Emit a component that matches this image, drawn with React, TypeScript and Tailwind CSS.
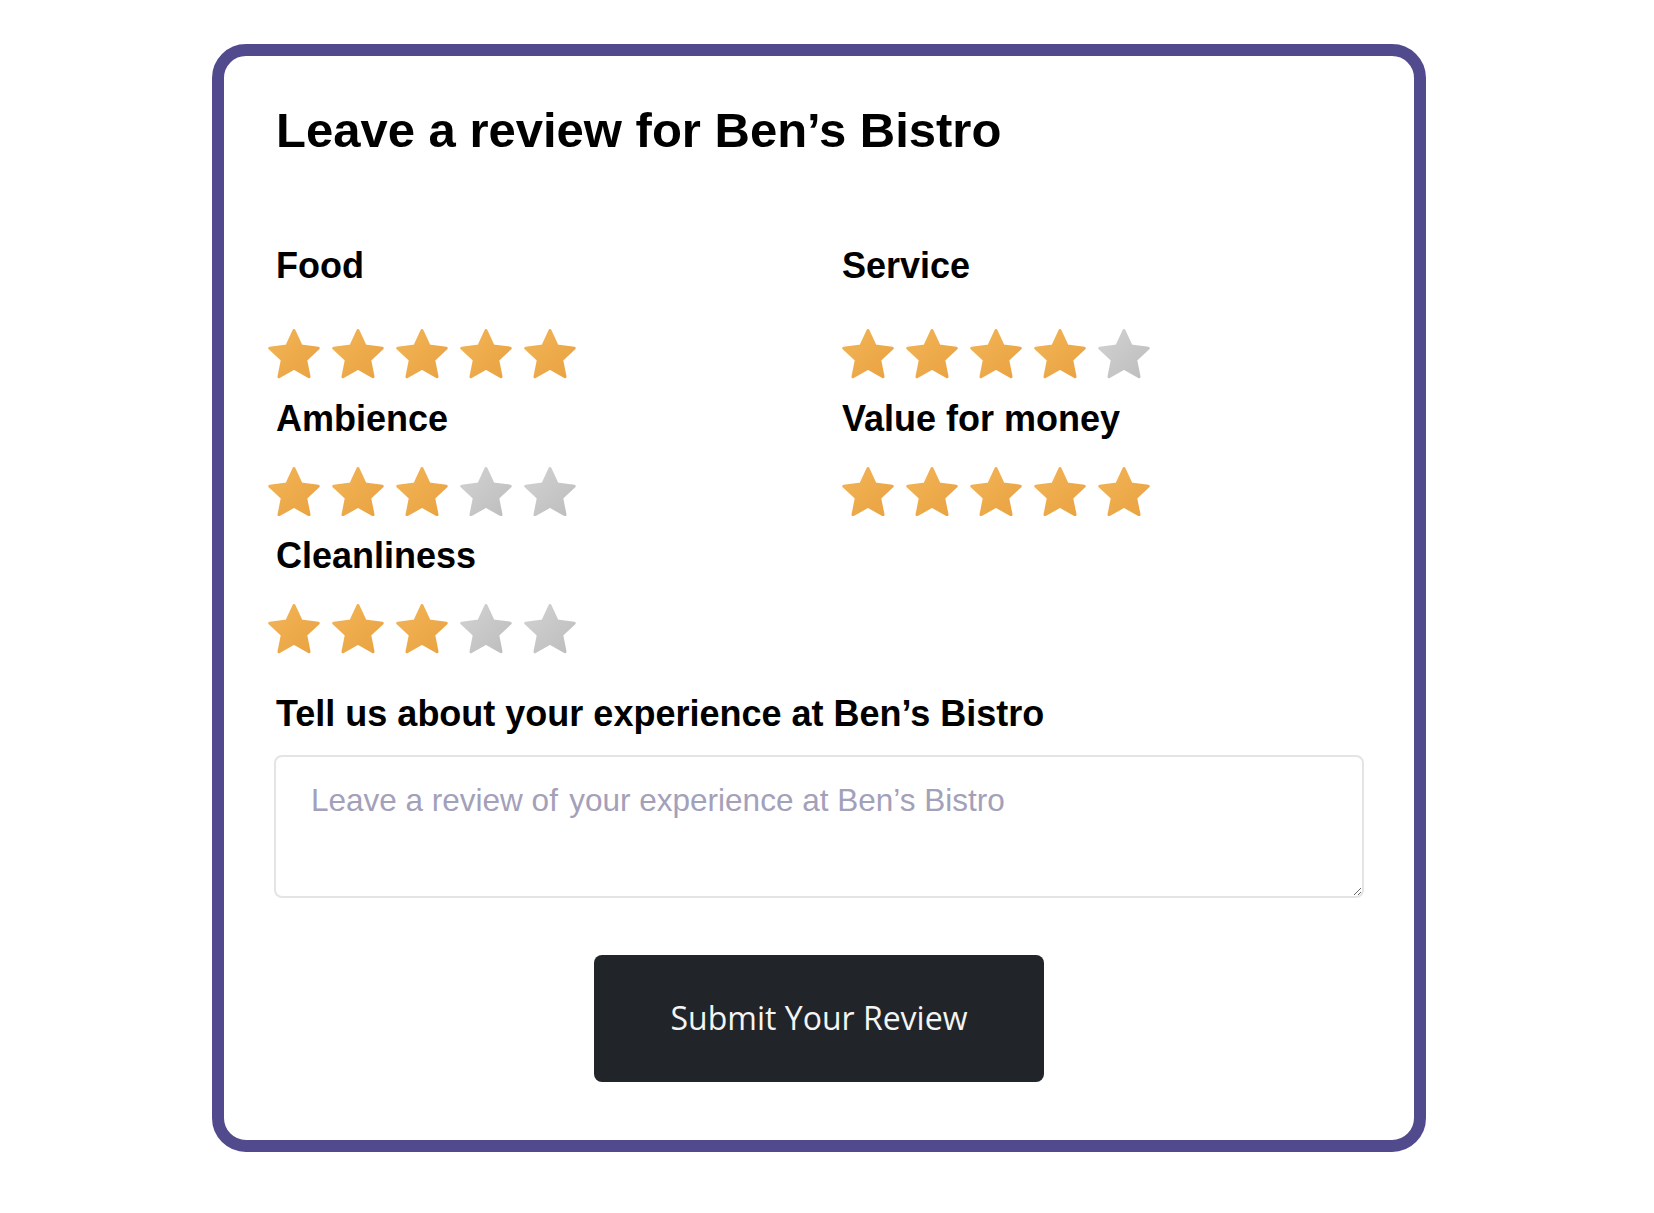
import React, { useId } from 'react';

const STAR_PATH =
  'M50 0 L64.11 30.58 L97.55 34.55 L72.83 57.42 L79.39 90.45 L50 74 L20.61 90.45 L27.17 57.42 L2.45 34.55 L35.89 30.58 Z';

const Star: React.FC<{ filled: boolean }> = ({ filled }) => {
  const id = useId();
  const from = filled ? '#f2b456' : '#d2d2d2';
  const to = filled ? '#e9a241' : '#bdbdbd';
  return (
    <svg width="52" height="49.5" viewBox="-1 -3 102 97" className="shrink-0">
      <defs>
        <linearGradient id={id} x1="0" y1="0" x2="1" y2="1">
          <stop offset="0" stopColor={from} />
          <stop offset="1" stopColor={to} />
        </linearGradient>
      </defs>
      <path d={STAR_PATH} fill={`url(#${id})`} stroke={`url(#${id})`} strokeWidth="6" strokeLinejoin="round" />
    </svg>
  );
};

interface RatingProps {
  label: string;
  value: number;
  first?: boolean;
  right?: boolean;
}

const Rating: React.FC<RatingProps> = ({ label, value, first, right }) => (
  <div className="flex flex-col">
    <div
      className={`pl-[2px] text-[36px] font-bold leading-none text-black ${first ? 'mb-[45px]' : 'mb-[30px]'}`}
    >
      {label}
    </div>
    <div className={`flex gap-[12px] ${right ? 'ml-[2px]' : '-ml-[6px]'}`}>
      {[1, 2, 3, 4, 5].map((n) => (
        <Star key={n} filled={n <= value} />
      ))}
    </div>
  </div>
);

const App: React.FC = () => {
  return (
    <div className="min-h-screen bg-white pt-[44px] pl-[212px]" style={{ fontFamily: '"Liberation Sans", Arial, sans-serif' }}>
      <div className="w-[1214px] h-[1108px] rounded-[34px] border-[12px] border-[#514a8c] bg-white px-[50px] pt-[50px]">
        <h1 className="pl-[2px] text-[49px] font-bold leading-none text-black">Leave a review for Ben’s Bistro</h1>

        <div className="mt-[93px] grid grid-cols-2 gap-x-[42px] gap-y-[22px]">
          <Rating label="Food" value={5} first />
          <Rating label="Service" value={4} first right />
          <Rating label="Ambience" value={3} />
          <Rating label="Value for money" value={5} right />
          <Rating label="Cleanliness" value={3} />
        </div>

        <div className="mt-[42px] pl-[2px] text-[36px] font-bold leading-none text-black">
          Tell us about your experience at Ben’s Bistro
        </div>

        <textarea
          className="mt-[23px] block h-[143px] w-full rounded-[8px] border-2 border-[#e4e4e4] bg-white pl-[35px] pr-4 pt-[25px] text-[31.5px] leading-[1.2] text-black outline-none placeholder:text-[#a3a0b9]"
          placeholder={'Leave a review of\u200A your experience at Ben’s Bistro'}
        />

        <div className="mt-[57px] flex justify-center">
          <button
            type="button"
            className="h-[127px] w-[450px] rounded-[8px] bg-[#212529] text-[32px] text-[#f4f4f4]"
            style={{ fontFamily: '"Open Sans", "Noto Sans", sans-serif' }}
          >
            Submit Your Review
          </button>
        </div>
      </div>
    </div>
  );
};

export default App;
